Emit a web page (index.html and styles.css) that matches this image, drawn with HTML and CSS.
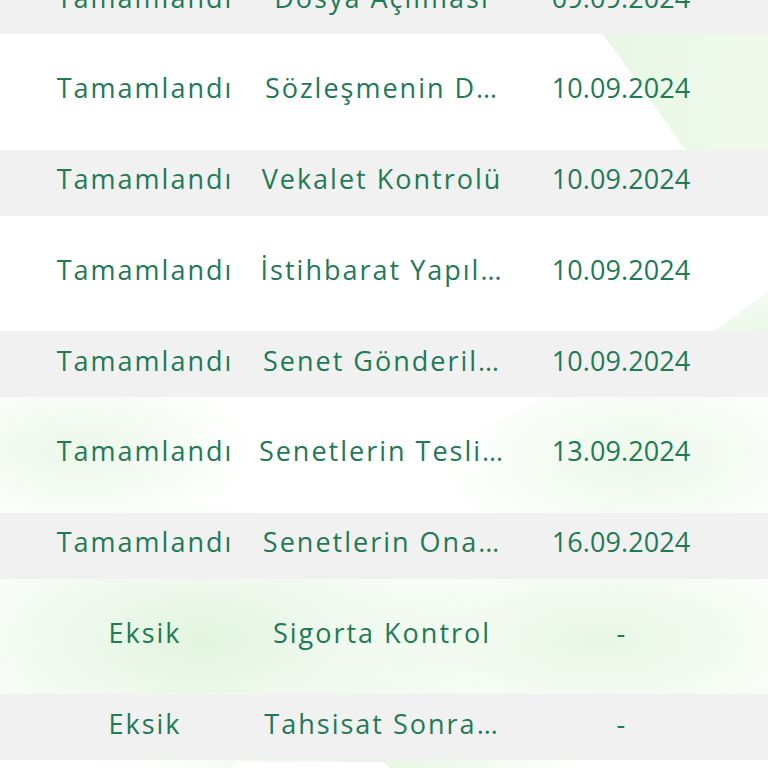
FILE: index.html
```html
<!DOCTYPE html>
<html lang="tr">
<head>
<meta charset="utf-8">
<title>Süreç Durumu</title>
<link rel="stylesheet" href="styles.css">
</head>
<body>
<div class="bg">
  <div class="sheen sheen-a"></div>
  <div class="sheen sheen-b"></div>
  <div class="sheen sheen-c"></div>
  <div class="sheen sheen-d"></div>
</div>
<main class="table">
  <div class="row alt"><span class="cell">Tamamlandı</span><span class="cell">Dosya Açılması</span><span class="cell date">09.09.2024</span></div>
  <div class="row"><span class="cell">Tamamlandı</span><span class="cell">Sözleşmenin D…</span><span class="cell date">10.09.2024</span></div>
  <div class="row alt"><span class="cell">Tamamlandı</span><span class="cell">Vekalet Kontrolü</span><span class="cell date">10.09.2024</span></div>
  <div class="row"><span class="cell">Tamamlandı</span><span class="cell">İstihbarat Yapıl…</span><span class="cell date">10.09.2024</span></div>
  <div class="row alt"><span class="cell">Tamamlandı</span><span class="cell">Senet Gönderil…</span><span class="cell date">10.09.2024</span></div>
  <div class="row"><span class="cell">Tamamlandı</span><span class="cell">Senetlerin Tesli…</span><span class="cell date">13.09.2024</span></div>
  <div class="row alt"><span class="cell">Tamamlandı</span><span class="cell">Senetlerin Ona…</span><span class="cell date">16.09.2024</span></div>
  <div class="row"><span class="cell">Eksik</span><span class="cell">Sigorta Kontrol</span><span class="cell date">-</span></div>
  <div class="row alt"><span class="cell">Eksik</span><span class="cell">Tahsisat Sonra…</span><span class="cell date">-</span></div>
</main>
</body>
</html>
```

FILE: styles.css
```css
html, body {
  margin: 0;
  padding: 0;
  width: 768px;
  height: 768px;
  overflow: hidden;
  background: #ffffff;
  font-family: "Open Sans", "Noto Sans", sans-serif;
}

.bg {
  position: absolute;
  inset: 0;
  overflow: hidden;
  z-index: 0;
  background:
    radial-gradient(ellipse 420px 200px at 200px 640px, rgba(214, 240, 210, 0.7), rgba(214, 240, 210, 0) 70%),
    radial-gradient(ellipse 380px 160px at 600px 640px, rgba(220, 243, 214, 0.65), rgba(220, 243, 214, 0) 70%),
    radial-gradient(ellipse 300px 120px at 380px 760px, rgba(220, 243, 214, 0.7), rgba(220, 243, 214, 0) 70%),
    radial-gradient(ellipse 260px 120px at 80px 450px, rgba(226, 244, 222, 0.65), rgba(226, 244, 222, 0) 70%),
    radial-gradient(ellipse 300px 140px at 640px 460px, rgba(226, 245, 222, 0.65), rgba(226, 245, 222, 0) 70%),
    #ffffff;
}

.sheen {
  position: absolute;
}

.sheen-a {
  left: 600px;
  top: 30px;
  width: 400px;
  height: 140px;
  background: linear-gradient(90deg, rgba(228, 246, 224, 0.85), rgba(242, 251, 240, 0.4));
  clip-path: polygon(0 0, 100% 0, 100% 100%, 25% 100%);
}

.sheen-b {
  left: 700px;
  top: 270px;
  width: 100px;
  height: 70px;
  background: linear-gradient(160deg, rgba(255,255,255,0), rgba(225, 245, 220, 0.85));
  clip-path: polygon(100% 0, 100% 100%, 0 100%);
}

.sheen-c {
  left: 250px;
  top: 396px;
  width: 300px;
  height: 100px;
  background: #ffffff;
  clip-path: polygon(0 0, 100% 0, 30% 100%);
  opacity: 0.9;
}

.sheen-d {
  left: 230px;
  top: 762px;
  width: 160px;
  height: 20px;
  background: #ffffff;
  border-radius: 10px 10px 0 0;
}

.table {
  position: relative;
  z-index: 1;
  margin-top: -32px;
  display: flex;
  flex-direction: column;
}

.row {
  box-sizing: border-box;
  display: grid;
  grid-template-columns: 246px 228px 250px;
  padding: 0 22px 8px;
  height: 115.5px;
  align-items: center;
  color: #217a56;
  font-size: 27px;
  letter-spacing: 2px;
}

.row.alt {
  height: 66px;
  background: #f1f1f1;
}

.cell {
  display: flex;
  justify-content: center;
  white-space: nowrap;
}

.cell.date {
  letter-spacing: 0.1px;
}
```
